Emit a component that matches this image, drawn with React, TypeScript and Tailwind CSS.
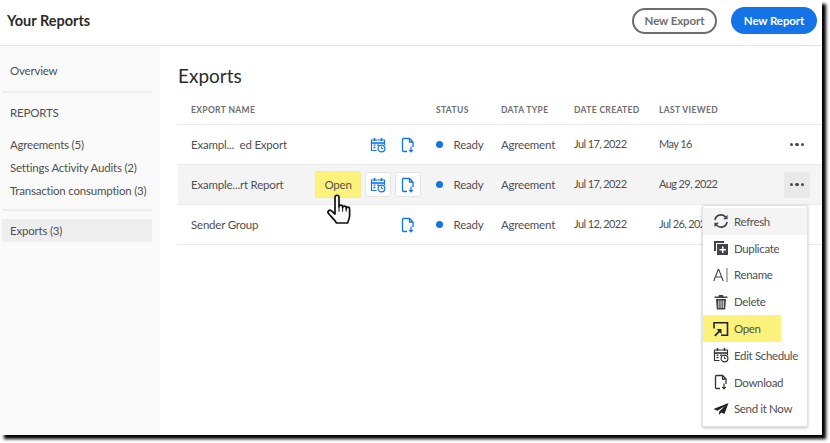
import React from 'react';

function CalendarIcon({ color = '#1473e6', size = 16 }: { color?: string; size?: number }) {
  return (
    <svg width={size} height={size} viewBox="0 0 16 16" fill="none" stroke={color} strokeWidth="1.2">
      <path d="M6.5 13.5H1.5V3h13v5" />
      <path d="M1.5 6h13" strokeWidth="1.6" />
      <path d="M4.5 1v3M11.5 1v3" strokeWidth="1.6" />
      <path d="M3.5 8.2h2M3.5 10.5h2M7 8.2h2" strokeWidth="1.3" />
      <circle cx="11.5" cy="11.5" r="3.4" />
      <path d="M11.5 9.6v2h1.6" strokeWidth="1" />
    </svg>
  );
}

function DocDownIcon({ color = '#1473e6', size = 16 }: { color?: string; size?: number }) {
  return (
    <svg width={size} height={size} viewBox="0 0 16 16" fill="none" stroke={color} strokeWidth="1.3">
      <path d="M7 14.5H3.5a1 1 0 0 1-1-1V2.5a1 1 0 0 1 1-1H9.5L13 5v5" />
      <path d="M9.5 1.5V5H13" />
      <path d="M11 9.5v5M9.2 12.8 11 14.8l1.8-2" strokeWidth="1.2" />
    </svg>
  );
}

function Dots() {
  return (
    <span className="flex gap-[2px]">
      <span className="w-[3.5px] h-[3.5px] rounded-full bg-[#4b4b4b]" />
      <span className="w-[3.5px] h-[3.5px] rounded-full bg-[#4b4b4b]" />
      <span className="w-[3.5px] h-[3.5px] rounded-full bg-[#4b4b4b]" />
    </span>
  );
}

function HandCursor() {
  return (
    <svg width="28" height="32" viewBox="0 0 28 32" fill="#fff" stroke="#111" strokeWidth="1.7" strokeLinejoin="round">
      <path d="M9 3.2c0-2.6 4-2.6 4 0v9.5c0-2 3.6-2 3.6 0v1c0-2 3.6-2 3.6 0v1c0-2 3.4-2 3.4 0v6.8c0 3-1.2 5-2 7.5H10.5c-1.5-3-5-6-8-9.5-1.7-2 .8-4.4 3-2.7L9 20z" />
      <path d="M13 12.7v5M16.6 13.7v4M20.2 14.7v3" fill="none" strokeWidth="1" />
    </svg>
  );
}

const rows = [
  { name: 'Exampl...  ed Export', created: 'Jul 17, 2022', viewed: 'May 16' },
  { name: 'Example...rt Report', created: 'Jul 17, 2022', viewed: 'Aug 29, 2022', active: true },
  { name: 'Sender Group', created: 'Jul 12, 2022', viewed: 'Jul 26, 2022', noSchedule: true },
];

const menuItems: { label: string; icon: React.ReactNode; hover?: boolean; mark?: boolean }[] = [
  {
    label: 'Refresh',
    hover: true,
    icon: (
      <svg width="16" height="16" viewBox="0 0 16 16" fill="none" stroke="#444" strokeWidth="1.7">
        <path d="M2 7a6 6 0 0 1 10.5-3l1.5 1.5" />
        <path d="M14 8.8a6 6 0 0 1-10.5 3.2L2 10.5" />
        <path d="M14.5 1.8v4.4h-4.4z" fill="#444" stroke="none" />
        <path d="M1.5 14.2V9.8h4.4z" fill="#444" stroke="none" />
      </svg>
    ),
  },
  {
    label: 'Duplicate',
    icon: (
      <svg width="16" height="16" viewBox="0 0 16 16" fill="#444">
        <path d="M1 1h10v2H3v8H1z" />
        <path d="M4 4h11v11H4z" />
        <path d="M9 6.5h1.5V9H13v1.5h-2.5V13H9v-2.5H6.5V9H9z" fill="#fff" />
      </svg>
    ),
  },
  {
    label: 'Rename',
    icon: (
      <svg width="16" height="16" viewBox="0 0 16 16" fill="none" stroke="#444">
        <path d="M.8 14 5.2 2.5h.6L10.2 14M2.5 10h6.2" strokeWidth="1.1" />
        <path d="M14 1v14" strokeWidth="1.1" stroke="#777" />
      </svg>
    ),
  },
  {
    label: 'Delete',
    icon: (
      <svg width="16" height="16" viewBox="0 0 16 16" fill="#444">
        <path d="M1.5 2.5h4l.5-1.5h4l.5 1.5h4V4h-13z" />
        <path d="M3 5h10l-.8 10.5H3.8z" />
        <path d="M5.4 6.5h.9v7.5h-.9zM7.6 6.5h.9v7.5h-.9zM9.8 6.5h.9v7.5h-.9z" fill="#fff" />
      </svg>
    ),
  },
  {
    label: 'Open',
    mark: true,
    icon: (
      <svg width="16" height="16" viewBox="0 0 16 16" fill="none" stroke="#222" strokeWidth="1.6">
        <path d="M1 7.5V1.8h13.5v12.4H8" />
        <path d="M1.8 14.8 6.8 9.8" strokeWidth="1.8" />
        <path d="M3.5 8H8.5V13z" fill="#222" stroke="none" />
      </svg>
    ),
  },
  { label: 'Edit Schedule', icon: <CalendarIcon color="#333" /> },
  { label: 'Download', icon: <DocDownIcon color="#333" /> },
  {
    label: 'Send it Now',
    icon: (
      <svg width="16" height="16" viewBox="0 0 16 16" fill="#222">
        <path d="M15.5 2 .5 8l4 1.8L12 5 6.2 10.6 6 14l2.4-2.4 3 1.4z" />
      </svg>
    ),
  },
];

export default function App() {
  return (
    <div className="w-[830px] h-[443px] bg-white overflow-hidden font-['Lato',sans-serif] text-[11.5px] tracking-[-0.2px] text-[#505050]">
      <div className="relative w-[822px] h-[435px] bg-white flex flex-col shadow-[4px_4px_3px_#000]">
        <header className="h-[46px] shrink-0 flex items-center justify-between pl-[7px] pr-[5px] pb-[4px] border-b border-[#e6e6e6]">
          <h1 className="text-[14.5px] tracking-normal font-bold text-[#2c2c2c]">Your Reports</h1>
          <div className="flex items-center gap-[14px]">
            <button className="w-[85px] h-[26px] rounded-full border-2 border-[#6e6e6e] text-[11.5px] tracking-[-0.1px] font-bold text-[#6e6e6e]">New Export</button>
            <button className="w-[86px] h-[27px] rounded-full bg-[#1473e6] text-[11.5px] tracking-[-0.1px] font-bold text-white">New Report</button>
          </div>
        </header>

        <div className="flex flex-1 min-h-0">
          <aside className="w-[160px] shrink-0 bg-[#fafafa] pt-[16px]">
            <div className="pl-[10px] h-[17px] leading-[17px]">Overview</div>
            <div className="mx-[2px] w-[150px] h-[2px] bg-[#eeeeee] mt-[12px]" />
            <div className="pl-[10px] mt-[11px] h-[17px] leading-[17px]">REPORTS</div>
            <div className="mt-[15px] flex flex-col gap-[6px] pl-[10px]">
              <div className="h-[17px] leading-[17px]">Agreements (5)</div>
              <div className="h-[17px] leading-[17px]">Settings Activity Audits (2)</div>
              <div className="h-[17px] leading-[17px]">Transaction consumption (3)</div>
            </div>
            <div className="mx-[2px] w-[150px] h-[2px] bg-[#eeeeee] mt-[10px]" />
            <div className="ml-[2px] w-[150px] mt-[8px] h-[23px] leading-[23px] bg-[#eeeeee] pl-[8px]">Exports (3)</div>
          </aside>

          <main className="flex-1 pl-[18px] pt-[18px]">
            <h2 className="text-[19px] tracking-normal leading-[24px] text-[#2c2c2c]">Exports</h2>
            <div className="mt-[9px]">
              <div className="grid grid-cols-[245px_65px_73px_85px_1fr] h-[28px] items-center pl-[13px] border-b border-[#eaeaea] text-[8.5px] font-bold tracking-[0.35px] text-[#6e6e6e]">
                <span>EXPORT NAME</span>
                <span>STATUS</span>
                <span>DATA TYPE</span>
                <span>DATE CREATED</span>
                <span>LAST VIEWED</span>
              </div>
              {rows.map((r) => (
                <div
                  key={r.name}
                  className={`grid grid-cols-[245px_65px_73px_85px_1fr] h-[40px] items-center pl-[13px] border-b border-[#eaeaea] ${r.active ? 'bg-[#f4f4f4]' : ''}`}
                >
                  <div className="flex items-center pr-[15px]">
                    <span className="whitespace-pre">{r.name}</span>
                    <div className="ml-auto flex items-center">
                      {r.active && (
                        <span className="w-[46px] h-[27px] mr-[4px] flex items-center justify-center bg-[#fdf27c] border border-[#f5eb8c] rounded-[2px]">Open</span>
                      )}
                      {!r.noSchedule && (
                        <span className={`w-[26px] h-[25px] flex items-center justify-center rounded-[3px] ${r.active ? 'bg-white border border-[#e4e4e4]' : ''}`}>
                          <CalendarIcon />
                        </span>
                      )}
                      <span className={`w-[26px] h-[25px] ml-[4px] flex items-center justify-center rounded-[3px] ${r.active ? 'bg-white border border-[#e4e4e4]' : ''}`}>
                        <DocDownIcon />
                      </span>
                    </div>
                  </div>
                  <div className="flex items-center">
                    <span className="w-[6.5px] h-[6.5px] rounded-full bg-[#1473e6] mr-[11px]" />
                    Ready
                  </div>
                  <span>Agreement</span>
                  <span className="text-[11px] tracking-[-0.6px]">{r.created}</span>
                  <div className="flex items-center justify-between pr-[12px]">
                    <span className="text-[11px] tracking-[-0.6px]">{r.viewed}</span>
                    {r.noSchedule ? null : (
                      <span className={`w-[26px] h-[26px] flex items-center justify-center rounded-[2px] ${r.active ? 'bg-[#e9e9e9]' : ''}`}>
                        <Dots />
                      </span>
                    )}
                  </div>
                </div>
              ))}
            </div>
          </main>
        </div>

        <div className="absolute left-[326px] top-[194px]">
          <HandCursor />
        </div>

        <div className="absolute left-[702px] top-[205px] w-[106px] h-[222px] bg-white rounded-[2px] border border-[#e2e2e2] shadow-[0_1px_3px_rgba(0,0,0,0.25)] pt-[2px] tracking-[-0.35px]">
          {menuItems.map((m) => (
            <div
              key={m.label}
              className={`h-[26.8px] flex items-center pl-[10px] gap-[5px] ${m.hover ? 'bg-[#f4f4f4]' : ''} ${m.mark ? 'bg-[#fdf27c] w-[78px]' : ''}`}
            >
              <span className="w-[16px] h-[16px] flex items-center justify-center shrink-0">{m.icon}</span>
              <span className="whitespace-nowrap">{m.label}</span>
            </div>
          ))}
        </div>
      </div>
    </div>
  );
}
